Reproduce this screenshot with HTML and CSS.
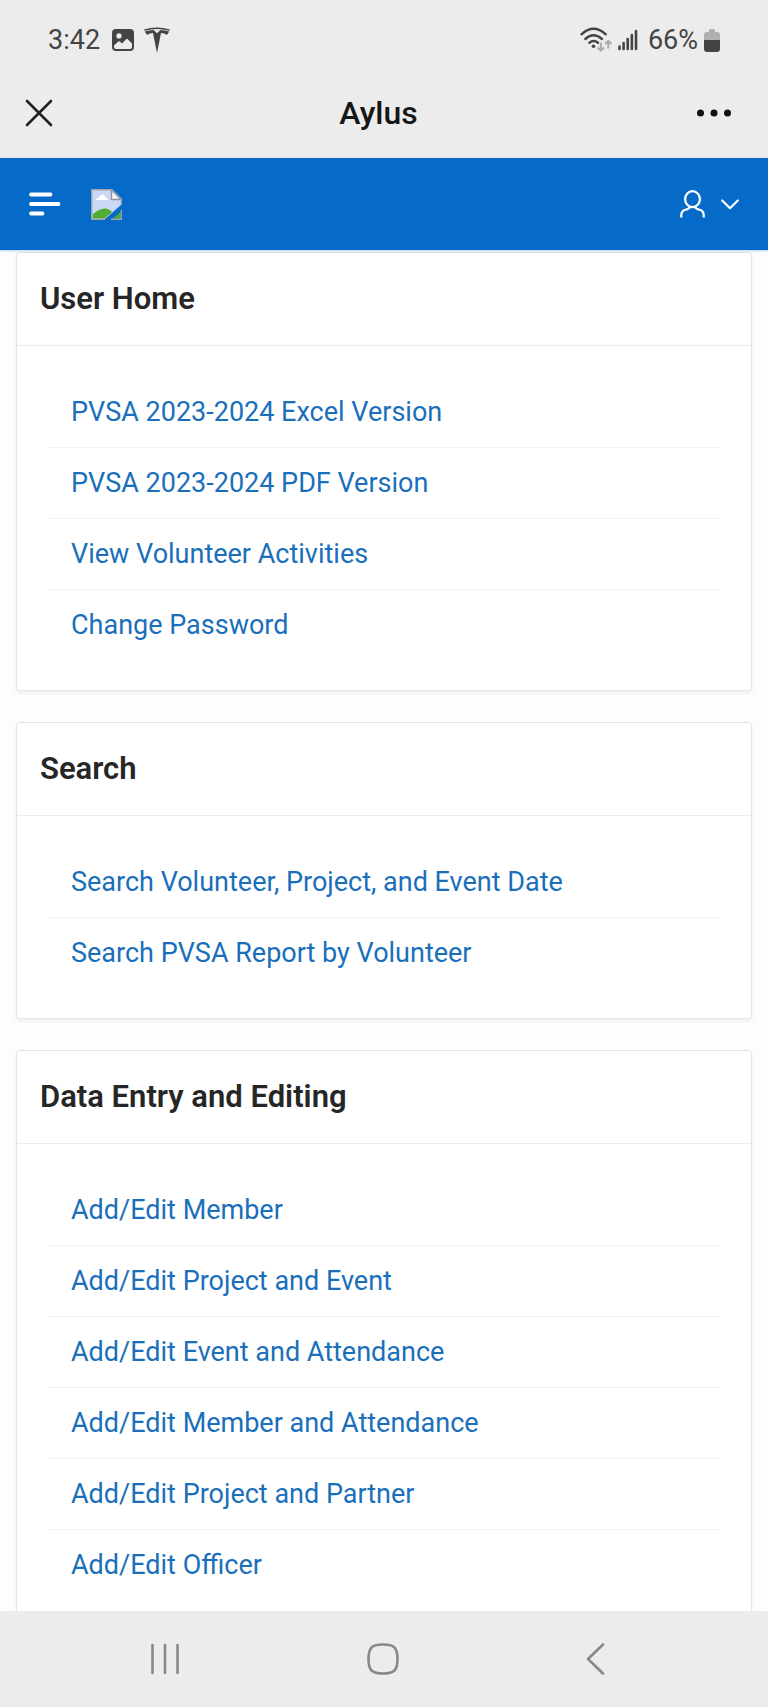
FILE: index.html
```html
<!DOCTYPE html>
<html lang="en">
<head>
<meta charset="utf-8">
<meta name="viewport" content="width=device-width, initial-scale=1">
<title>Aylus</title>
<link rel="stylesheet" href="styles.css">
</head>
<body>
<div class="screen">
  <div class="status-bar">
    <div class="status-left">
      <span class="clock">3:42</span>
      <svg width="22" height="22" viewBox="0 0 22 22" role="img" aria-label="Picture notification">
        <path fill="#444" fill-rule="evenodd" d="M4 0h14a4 4 0 0 1 4 4v14a4 4 0 0 1-4 4H4a4 4 0 0 1-4-4V4a4 4 0 0 1 4-4zM7 4.300a2.600 2.600 0 1 0 0 5.200a2.600 2.600 0 0 0 0-5.200zM2 16.500v1.500a2 2 0 0 0 2 2h14a2 2 0 0 0 2-2v-3.500l-4.200-4.300q-.800-.700-1.600 0L10 14.500l-2-1.900q-.800-.700-1.600 0z"/>
      </svg>
      <svg width="26" height="26" viewBox="0 0 26 26" role="img" aria-label="Tesla">
        <path fill="#444" d="M0 2.500Q13-1.300 26 2.500l-.700 1.200Q13 .400.700 3.700zM.900 4.500Q5 3.200 9.500 3L13 6.300 16.500 3q4.500.200 8.600 1.500-.900 2.500-2.800 3.200-1.300-1.500-5.300-1.600L13 26 9 6.100q-4 .100-5.300 1.600Q1.800 7 .900 4.500z"/>
      </svg>
    </div>
    <div class="status-right">
      <svg width="32" height="26" viewBox="0 0 32 26" role="img" aria-label="Wi-Fi">
        <g fill="none" stroke="#444" stroke-width="2.400" stroke-linecap="round">
          <path d="M1.500 7.300Q13.500-3.700 25.800 7.300"/>
          <path d="M5.300 12Q13.500 4.500 22 12"/>
          <path d="M9.300 15.800Q13.500 12.200 18 15.800"/>
        </g>
        <circle cx="13.500" cy="19.200" r="1.800" fill="#444"/>
        <g fill="none" stroke="#aaa" stroke-width="2">
          <path d="M20.800 15.500v8M17.500 20.500l3.300 3.200 3.300-3.200M28.300 21.500v-7.500M25 17l3.300-3.200L31.600 17"/>
        </g>
      </svg>
      <svg width="20" height="22" viewBox="0 0 20 22" role="img" aria-label="Signal">
        <path stroke="#444" stroke-width="2.600" stroke-linecap="round" d="M1.500 17.500v2.500M5.600 14v6M9.700 10v10M13.800 6v14M18 2v18"/>
      </svg>
      <span class="battery-text">66%</span>
      <svg width="16" height="23" viewBox="0 0 16 23" role="img" aria-label="Battery">
        <path fill="#b0b0b0" d="M0 11V6q0-3 3-3h1.500q.300-3 2-3h3q1.700 0 2 3H13q3 0 3 3v5z"/>
        <path fill="#444" d="M0 11h16v9q0 3-3 3H3q-3 0-3-3z"/>
      </svg>
    </div>
  </div>

  <div class="title-bar">
    <button class="icon-button" type="button" aria-label="Close">
      <svg width="28" height="28" viewBox="0 0 28 28"><path stroke="#222" stroke-width="2.600" stroke-linecap="round" d="M2 2l24 24M26 2L2 26"/></svg>
    </button>
    <span class="title">Aylus</span>
    <button class="icon-button" type="button" aria-label="More options">
      <svg width="36" height="8" viewBox="0 0 36 8" fill="#111"><circle cx="4.500" cy="4" r="3.500"/><circle cx="18" cy="4" r="3.500"/><circle cx="31.500" cy="4" r="3.500"/></svg>
    </button>
  </div>

  <header class="app-header">
    <div class="header-group">
      <button class="icon-button" type="button" aria-label="Menu">
        <svg width="32" height="24" viewBox="0 0 32 24"><path stroke="#fff" stroke-width="3.800" stroke-linecap="round" d="M2 2.500h19.500M2 12h27.500M2 21.500h11.500"/></svg>
      </button>
      <a class="logo" href="#" aria-label="Home">
        <svg width="31" height="31" viewBox="0 0 31 31">
          <path fill="#cbd9f7" d="M1 1h20l9 9v6L14 30H1z"/>
          <path fill="#fff" d="M5 11q0-2.500 3-2.500 1-3 3.500-3t3 3q2.500 0 2.500 2.500z"/>
          <path fill="#50ac32" d="M1.500 29.500v-4Q8 19.500 14 19.500q4 0 7 3.500l-7.500 6.500z"/>
          <path fill="#50ac32" d="M22 29.500l7.500-6.500v6.500z"/>
          <path fill="#f3f6fd" stroke="#8d939b" stroke-width="1.400" d="M20.500 1v9.500H30z"/>
          <path fill="none" stroke="#9da3ab" stroke-width="1.400" d="M14 30.200H.700V.700H21l9.300 9.300v6M20 30.200h10.300V21"/>
        </svg>
      </a>
    </div>
    <button class="icon-button account" type="button" aria-label="Account">
      <svg width="25" height="29" viewBox="0 0 25 29" fill="none" stroke="#fff" stroke-width="2.200">
        <ellipse cx="12.500" cy="9.200" rx="7.400" ry="8"/>
        <path d="M1.300 27.500V25q0-4.200 4.200-5.200 4-1 4.500-3M23.700 27.500V25q0-4.200-4.200-5.200-4-1-4.500-3"/>
      </svg>
      <svg width="18" height="11" viewBox="0 0 18 11" fill="none" stroke="#fff" stroke-width="2.200" stroke-linecap="round" stroke-linejoin="round"><path d="M1.200 1.500L9 9.300l7.800-7.800"/></svg>
    </button>
  </header>

  <main class="content">
    <section class="card">
      <h2 class="card-title">User Home</h2>
      <ul class="links">
        <li><a href="#">PVSA 2023-2024 Excel Version</a></li>
        <li><a href="#">PVSA 2023-2024 PDF Version</a></li>
        <li><a href="#">View Volunteer Activities</a></li>
        <li><a href="#">Change Password</a></li>
      </ul>
    </section>
    <section class="card">
      <h2 class="card-title">Search</h2>
      <ul class="links">
        <li><a href="#">Search Volunteer, Project, and Event Date</a></li>
        <li><a href="#">Search PVSA Report by Volunteer</a></li>
      </ul>
    </section>
    <section class="card">
      <h2 class="card-title">Data Entry and Editing</h2>
      <ul class="links">
        <li><a href="#">Add/Edit Member</a></li>
        <li><a href="#">Add/Edit Project and Event</a></li>
        <li><a href="#">Add/Edit Event and Attendance</a></li>
        <li><a href="#">Add/Edit Member and Attendance</a></li>
        <li><a href="#">Add/Edit Project and Partner</a></li>
        <li><a href="#">Add/Edit Officer</a></li>
      </ul>
    </section>
  </main>

  <nav class="system-nav" aria-label="System navigation">
    <button class="icon-button" type="button" aria-label="Recent apps">
      <svg width="30" height="32" viewBox="0 0 30 32"><path stroke="#888" stroke-width="2.600" stroke-linecap="round" d="M2.500 2v28M15 2v28M27.500 2v28"/></svg>
    </button>
    <button class="icon-button" type="button" aria-label="Home screen">
      <svg width="32" height="32" viewBox="0 0 32 32"><path fill="none" stroke="#888" stroke-width="2.600" d="M16 1.500c10.500 0 14.500 2.500 14.500 14.500S26.500 30.500 16 30.500 1.500 28 1.500 16 5.500 1.500 16 1.500z"/></svg>
    </button>
    <button class="icon-button" type="button" aria-label="Back">
      <svg width="19" height="32" viewBox="0 0 19 32"><path fill="none" stroke="#888" stroke-width="2.600" stroke-linecap="round" stroke-linejoin="round" d="M17 1.500L2 16l15 14.500"/></svg>
    </button>
  </nav>
</div>
</body>
</html>
```
FILE: styles.css
```css
* {
  box-sizing: border-box;
}

body {
  margin: 0;
  font-family: Roboto, "Liberation Sans", sans-serif;
  color: #262626;
  background: #fdfdfd;
}

svg {
  display: block;
  flex: none;
}

.screen {
  display: flex;
  flex-direction: column;
  height: 100vh;
}

.icon-button {
  display: flex;
  align-items: center;
  padding: 0;
  border: 0;
  background: none;
  cursor: pointer;
}

.status-bar {
  display: flex;
  flex: none;
  align-items: center;
  justify-content: space-between;
  height: 80px;
  padding: 0 48px;
  background: #ececec;
  color: #444;
  font-size: 27px;
}

.status-left,
.status-right {
  display: flex;
  align-items: center;
}

.status-left {
  gap: 10px;
}

.clock {
  margin-right: 2px;
}

.status-right {
  gap: 6px;
}

.battery-text {
  margin-left: 4px;
}

.title-bar {
  display: grid;
  flex: none;
  grid-template-columns: 1fr auto 1fr;
  align-items: center;
  height: 78px;
  padding: 0 36px 12px 25px;
  background: #ececec;
  color: #161616;
}

.title-bar .icon-button:last-child {
  justify-self: end;
}

.title {
  font-size: 32px;
  font-weight: 500;
}

.app-header {
  display: flex;
  flex: none;
  align-items: center;
  justify-content: space-between;
  height: 92px;
  padding: 0 29px;
  background: #066ac9;
  box-shadow: 0 1px 2px #b4cdef;
  z-index: 1;
}

.header-group {
  display: flex;
  align-items: center;
  gap: 30px;
}

.account {
  gap: 16px;
}

.content {
  display: flex;
  flex: 1;
  flex-direction: column;
  gap: 31px;
  min-height: 0;
  padding: 2px 16px 0;
  overflow: hidden;
}

.card {
  flex: none;
  border: 1px solid #e4e5e7;
  border-radius: 3px;
  background: #fff;
  box-shadow: 0 2px 4px #00000010;
}

.card-title {
  margin: 0;
  padding: 0 23px;
  border-bottom: 1px solid #ebecee;
  font-size: 31px;
  font-weight: 600;
  line-height: 92px;
}

.links {
  margin: 0;
  padding: 31px 31px 30px;
  list-style: none;
}

.links li {
  padding: 0 23px;
  font-size: 27px;
  line-height: 70px;
}

.links li + li {
  border-top: 1px solid #f1f1f2;
}

.links a {
  color: #1a6fbb;
  text-decoration: none;
}

.system-nav {
  display: flex;
  flex: none;
  align-items: center;
  justify-content: space-between;
  height: 96px;
  padding: 0 163px 0 150px;
  background: #ececec;
}
```
